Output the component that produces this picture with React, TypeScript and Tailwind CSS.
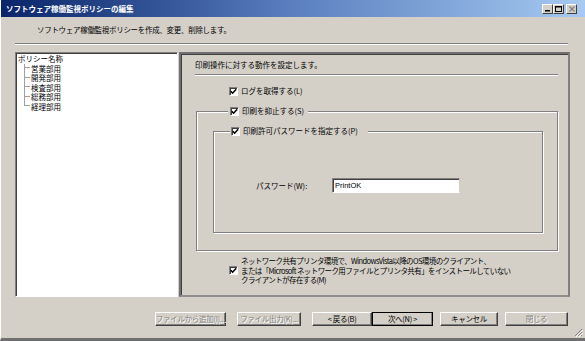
import React from "react"

const face = "font-['Noto_Sans_CJK_JP','Noto_Sans_CJK_SC',sans-serif]"

function Check() {
  return (
    <span className="inline-flex w-[9px] h-[9px] shrink-0 items-center justify-center bg-white border border-t-[#808080] border-l-[#808080] border-b-white border-r-white shadow-[inset_1px_1px_0_#404040]">
      <svg width="7" height="7" viewBox="0 0 7 7">
        <polyline points="0.8,3.2 2.6,5.2 6.2,1.2" fill="none" stroke="#000" strokeWidth="1.5" />
      </svg>
    </span>
  )
}

function CheckLabel({ text }: { text: string }) {
  return (
    <span className="flex items-center gap-[3px] leading-[10px]">
      <Check />
      <span>{text}</span>
    </span>
  )
}

function WinButton({
  label,
  w,
  ml,
  disabled,
  def,
}: {
  label: string
  w: string
  ml: string
  disabled?: boolean
  def?: boolean
}) {
  return (
    <div
      className={`${w} ${ml} h-[14px] flex items-center justify-center whitespace-nowrap tracking-[-0.3px] bg-[#d4d0c8] border ${
        def ? "border-black" : "border-t-white border-l-white border-b-[#404040] border-r-[#404040]"
      } shadow-[inset_-1px_-1px_0_#808080] ${
        disabled ? "text-[#808080] [text-shadow:1px_1px_0_#fff]" : "text-black"
      }`}
    >
      {label}
    </div>
  )
}

function TitleButton({ children }: { children: React.ReactNode }) {
  return (
    <div className="w-[11px] h-[10px] flex items-center justify-center bg-[#d4d0c8] border border-t-white border-l-white border-b-[#404040] border-r-[#404040]">
      {children}
    </div>
  )
}

const depts = ["営業部用", "開発部用", "検査部用", "総務部用", "経理部用"]

export default function App() {
  return (
    <div className={`${face} w-[585px] h-[341px] bg-[#d4d0c8] text-[7.5px] text-black flex flex-col border-l border-l-white border-b-[3px] border-b-[#707070] overflow-hidden`}>
      {/* Title bar */}
      <div className="h-[17px] shrink-0 flex items-center pl-[5px] pr-[8px] bg-gradient-to-r from-[#0a246a] via-[#5b7fbf] to-[#a6caf0]">
        <span className="text-white font-bold text-[7.5px]">ソフトウェア稼働監視ポリシーの編集</span>
        <div className="ml-auto flex items-center">
          <TitleButton>
            <svg width="6" height="6" viewBox="0 0 6 6">
              <rect x="0" y="4" width="5" height="1.5" fill="#000" />
            </svg>
          </TitleButton>
          <TitleButton>
            <svg width="7" height="6" viewBox="0 0 7 6">
              <rect x="0.5" y="0.5" width="6" height="5" fill="none" stroke="#000" />
              <rect x="0" y="0" width="7" height="1.5" fill="#000" />
            </svg>
          </TitleButton>
          <div className="ml-[2px]">
            <TitleButton>
              <svg width="6" height="6" viewBox="0 0 6 6">
                <path d="M0.5 0.5 L5.5 5.5 M5.5 0.5 L0.5 5.5" stroke="#808080" strokeWidth="1.2" />
              </svg>
            </TitleButton>
          </div>
        </div>
      </div>

      {/* Subtitle */}
      <div className="h-[26px] shrink-0 flex items-center pl-[36px] tracking-[-0.3px]">
        ソフトウェア稼働監視ポリシーを作成、変更、削除します。
      </div>
      <div className="ml-[14px] w-[553px] h-[2px] border-t border-t-[#808080] border-b border-b-white" />

      {/* Body */}
      <div className="mt-[7px] h-[245px] shrink-0 flex">
        {/* Tree */}
        <div className="ml-[14px] w-[163px] bg-white border border-t-[#808080] border-l-[#808080] border-b-white border-r-white shadow-[inset_1px_1px_0_#404040] pl-[2px] pt-[1px]">
          <div className="leading-[9.5px]">ポリシー名称</div>
          <div className="ml-[6px]">
            {depts.map((d, i) => (
              <div key={d} className="flex h-[9.5px] leading-[9.5px]">
                {i < depts.length - 1 ? (
                  <span className="w-[6px] h-full border-l border-l-[#a0a0a0]">
                    <span className="block h-1/2 border-b border-b-[#a0a0a0]" />
                  </span>
                ) : (
                  <span className="w-[6px] h-1/2 border-l border-b border-[#a0a0a0]" />
                )}
                <span className="ml-[1px]">{d}</span>
              </div>
            ))}
          </div>
        </div>

        {/* Right panel */}
        <div className="ml-[1px] w-[391px] border-2 border-t-[#707070] border-l-[#707070] border-b-[#909090] border-r-[#808080] shadow-[inset_1px_1px_0_#404040] flex flex-col">
          <div className="mt-[6px] ml-[14px] h-[10px] leading-[10px]">印刷操作に対する動作を設定します。</div>
          <div className="mt-[4px] ml-[14px] w-[363px] h-[2px] border-t border-t-[#808080] border-b border-b-white" />

          <div className="mt-[10px] ml-[48px] h-[10px]">
            <CheckLabel text="ログを取得する(L)" />
          </div>

          <fieldset className="mt-[10px] ml-[15px] w-[362px] border border-[#808080] shadow-[inset_1px_1px_0_#fff,1px_1px_0_#fff] pb-[17px]">
            <legend className="ml-[31px] px-[2px] bg-[#d4d0c8] pr-[4px]">
              <CheckLabel text="印刷を抑止する(S)" />
            </legend>
            <fieldset className="mt-[10px] ml-[16px] w-[330px] border border-[#808080] shadow-[inset_1px_1px_0_#fff,1px_1px_0_#fff]">
              <legend className="ml-[16px] px-[1px] bg-[#d4d0c8] pr-[10px]">
                <CheckLabel text="印刷許可パスワードを指定する(P)" />
              </legend>
              <div className="mt-[42px] mb-[39px] flex items-center h-[15px]">
                <span className="ml-[42px] w-[76px]">パスワード(W):</span>
                <div className="w-[128px] h-[15px] bg-white border border-t-[#808080] border-l-[#808080] border-b-white border-r-[#d4d0c8] shadow-[inset_1px_1px_0_#404040] flex items-center pl-[2px] text-[7.5px] font-['Liberation_Sans',sans-serif]">
                  PrintOK
                </div>
              </div>
            </fieldset>
          </fieldset>

          <div className="mt-[5px] ml-[48px] flex items-center gap-[3px]">
            <Check />
            <div className="leading-[9.5px] tracking-[-0.6px]">
              <div>ネットワーク共有プリンタ環境で、WindowsVista以降のOS環境のクライアント、</div>
              <div>または「Microsoft ネットワーク用ファイルとプリンタ共有」をインストールしていない</div>
              <div>クライアントが存在する(M)</div>
            </div>
          </div>
        </div>
      </div>

      {/* Buttons */}
      <div className="mt-[15px] flex">
        <WinButton label="ファイルから追加(I)..." w="w-[71px]" ml="ml-[154px]" disabled />
        <WinButton label="ファイル出力(K)..." w="w-[64px]" ml="ml-[11px]" disabled />
        <WinButton label="< 戻る(B)" w="w-[60px]" ml="ml-[11px]" />
        <WinButton label="次へ(N) >" w="w-[61px]" ml="ml-[0px]" def />
        <WinButton label="キャンセル" w="w-[58px]" ml="ml-[7px]" />
        <WinButton label="閉じる" w="w-[63px]" ml="ml-[7px]" disabled />
      </div>

      <div className="mt-auto flex justify-end pr-[2px] pb-[1px]">
        <svg width="10" height="10" viewBox="0 0 10 10">
          <path d="M9 2 L2 9 M9 5 L5 9 M9 8 L8 9" stroke="#808080" strokeWidth="1" />
          <path d="M10 3 L3 10 M10 6 L6 10" stroke="#fff" strokeWidth="1" />
        </svg>
      </div>
    </div>
  )
}
